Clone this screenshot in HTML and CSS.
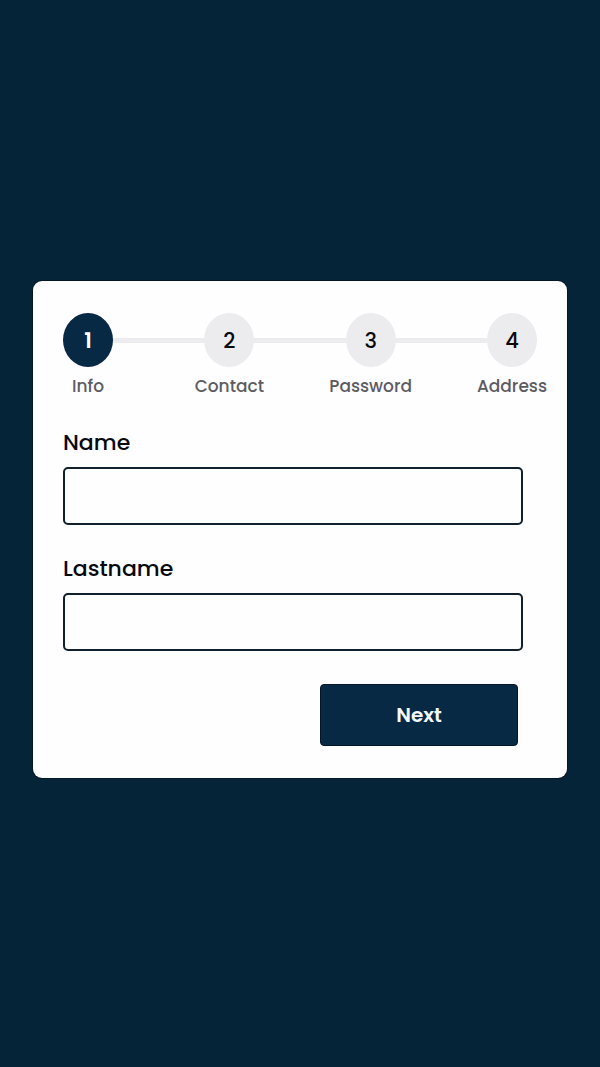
FILE: index.html
```
<!DOCTYPE html>
<html lang="en">
<head>
<meta charset="utf-8">
<meta name="viewport" content="width=device-width, initial-scale=1">
<title>Multi-step form</title>
<link rel="stylesheet" href="styles.css">
</head>
<body>
<main class="page">
  <form class="card">
    <ol class="steps">
      <li class="step active" aria-current="step"><span class="circle">1</span><span class="caption">Info</span></li>
      <li class="line"></li>
      <li class="step"><span class="circle">2</span><span class="caption">Contact</span></li>
      <li class="line"></li>
      <li class="step"><span class="circle">3</span><span class="caption">Password</span></li>
      <li class="line"></li>
      <li class="step"><span class="circle">4</span><span class="caption">Address</span></li>
    </ol>
    <div class="field">
      <label for="name">Name</label>
      <input id="name" name="name" type="text">
    </div>
    <div class="field">
      <label for="lastname">Lastname</label>
      <input id="lastname" name="lastname" type="text">
    </div>
    <div class="actions">
      <button class="next" type="button">Next</button>
    </div>
  </form>
</main>
</body>
</html>
```
FILE: styles.css
```
* {
  box-sizing: border-box;
}

body {
  margin: 0;
  background: #062438;
  color: #08090d;
  font-family: Poppins, Inter, "Open Sans", sans-serif;
  font-weight: 500;
}

.page {
  display: flex;
  align-items: center;
  min-height: 100vh;
  padding: 0 33px 8px;
}

.card {
  flex: 1;
  padding: 32px 30px;
  border-radius: 9px;
  background: #fefdff;
  box-shadow: 0 0 0 1px #041728;
}

.steps {
  display: flex;
  margin: 0 0 28px;
  padding: 0;
  list-style: none;
}

.step {
  display: flex;
  flex: none;
  flex-direction: column;
  align-items: center;
  gap: 6px;
  width: 50px;
}

.circle {
  display: flex;
  align-items: center;
  justify-content: center;
  width: 50px;
  height: 54px;
  border-radius: 50%;
  background: #ecebed;
  font-size: 21px;
}

.active .circle {
  background: #072944;
  color: #fff;
  font-weight: 600;
}

.caption {
  color: #5c5c5f;
  font-size: 17px;
  line-height: 26px;
  white-space: nowrap;
}

.line {
  flex: 1;
  height: 5px;
  margin-top: 25px;
  background: #ecebed;
}

.field {
  display: flex;
  flex-direction: column;
  gap: 8px;
  width: 97%;
  margin-bottom: 28px;
}

.field label {
  font-size: 22px;
  line-height: 32px;
}

.field input {
  width: 100%;
  height: 58px;
  padding: 0 16px;
  border: 2px solid #11202e;
  border-radius: 5px;
  background: #fefdff;
  color: inherit;
  font: inherit;
  font-size: 20px;
}

.actions {
  display: flex;
  justify-content: flex-end;
  padding: 5px 19px 0 0;
}

.next {
  flex: 0 0 198px;
  height: 62px;
  border: 1px solid #041728;
  border-radius: 4px;
  background: #072944;
  color: #f4f8ff;
  font: inherit;
  font-size: 20px;
  font-weight: 600;
  cursor: pointer;
}
```
